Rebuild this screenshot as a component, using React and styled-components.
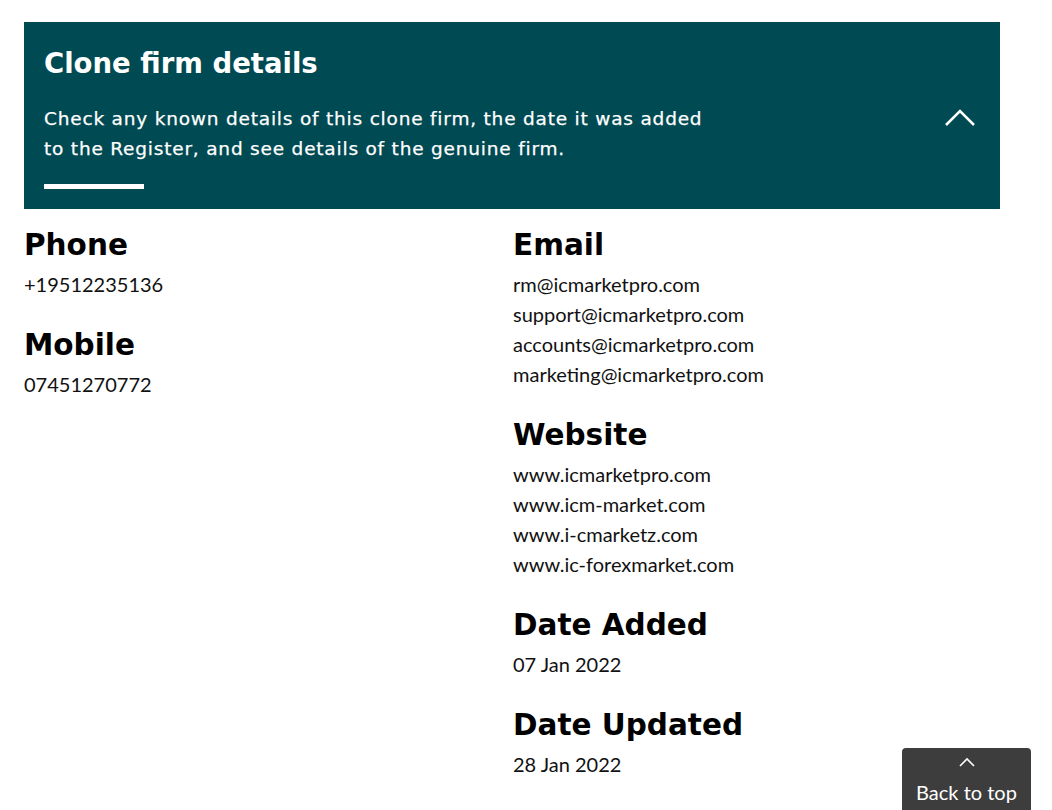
import styled, { createGlobalStyle } from 'styled-components';

const GlobalStyle = createGlobalStyle`
  body {
    margin: 0;
    background: #fff;
    font-family: Lato, 'Liberation Sans', sans-serif;
    color: #111;
  }
`;

const Page = styled.div`
  padding: 22px 24px 0;
  width: 976px;
`;

const Banner = styled.section`
  background: #004a53;
  color: #fff;
  padding: 22px 20px 20px;
  display: flex;
  justify-content: space-between;
  align-items: flex-start;
`;

const BannerText = styled.div`
  max-width: 700px;
`;

const Title = styled.h2`
  margin: 0;
  font-family: 'DejaVu Sans', Verdana, sans-serif;
  font-weight: 700;
  font-size: 27.5px;
  line-height: 38px;
`;

const Intro = styled.p`
  margin: 22px 0 0;
  font-family: 'DejaVu Sans', sans-serif;
  font-weight: 400;
  font-size: 18.5px;
  letter-spacing: 0.8px;
  line-height: 30px;
  width: 690px;
  -webkit-text-stroke: 0.25px #fff;
`;

const Rule = styled.div`
  width: 100px;
  height: 5px;
  background: #fff;
  margin-top: 20px;
`;

const Toggle = styled.button`
  background: none;
  border: 0;
  padding: 0;
  margin: 64px 4px 0 0;
  color: #fff;
  cursor: pointer;
`;

const Columns = styled.div`
  display: grid;
  grid-template-columns: 1fr 1fr;
  padding-top: 16px;
`;

const Column = styled.div`
  display: flex;
  flex-direction: column;
  gap: 26px;
  padding-left: ${(p) => (p.$right ? '1px' : '0')};
`;

const Field = styled.div``;

const Label = styled.h3`
  margin: 0 0 4px;
  font-family: 'DejaVu Sans', Verdana, sans-serif;
  font-weight: 700;
  font-size: 29.5px;
  line-height: 40px;
  color: #000;
`;

const Value = styled.div`
  font-size: 20px;
  line-height: 30px;
  color: #111;
`;

const BackToTop = styled.a`
  position: fixed;
  right: 21px;
  bottom: 0;
  width: 129px;
  height: 62px;
  background: #3d3d3d;
  border-radius: 4px 4px 0 0;
  color: #fff;
  font-size: 20px;
  display: flex;
  flex-direction: column;
  align-items: center;
  padding-top: 8px;
  box-sizing: border-box;
  text-decoration: none;
`;

const BackLabel = styled.span`
  margin-top: 12px;
  line-height: 24px;
`;

const contacts = [
  { label: 'Phone', values: ['+19512235136'] },
  { label: 'Mobile', values: ['07451270772'] },
];

const details = [
  {
    label: 'Email',
    values: [
      'rm@icmarketpro.com',
      'support@icmarketpro.com',
      'accounts@icmarketpro.com',
      'marketing@icmarketpro.com',
    ],
  },
  {
    label: 'Website',
    values: [
      'www.icmarketpro.com',
      'www.icm-market.com',
      'www.i-cmarketz.com',
      'www.ic-forexmarket.com',
    ],
  },
  { label: 'Date Added', values: ['07 Jan 2022'] },
  { label: 'Date Updated', values: ['28 Jan 2022'] },
];

const FieldList = ({ items }) =>
  items.map((item) => (
    <Field key={item.label}>
      <Label>{item.label}</Label>
      {item.values.map((v) => (
        <Value key={v}>{v}</Value>
      ))}
    </Field>
  ));

const App = () => {
  return (
    <>
      <GlobalStyle />
      <Page>
        <Banner>
          <BannerText>
            <Title>Clone firm details</Title>
            <Intro>
              Check any known details of this clone firm, the date it was added
              <br />
              to the Register, and see details of the genuine firm.
            </Intro>
            <Rule />
          </BannerText>
          <Toggle aria-label='collapse'>
            <svg width='32' height='20' viewBox='0 0 32 20'>
              <path d='M2 17 L16 3 L30 17' fill='none' stroke='#fff' strokeWidth='2.5' />
            </svg>
          </Toggle>
        </Banner>
        <Columns>
          <Column>
            <FieldList items={contacts} />
          </Column>
          <Column $right>
            <FieldList items={details} />
          </Column>
        </Columns>
      </Page>
      <BackToTop href='#'>
        <svg width='18' height='12' viewBox='0 0 18 12'>
          <path d='M2 10 L9 3 L16 10' fill='none' stroke='#fff' strokeWidth='1.6' />
        </svg>
        <BackLabel>Back to top</BackLabel>
      </BackToTop>
    </>
  );
};

export default App;
